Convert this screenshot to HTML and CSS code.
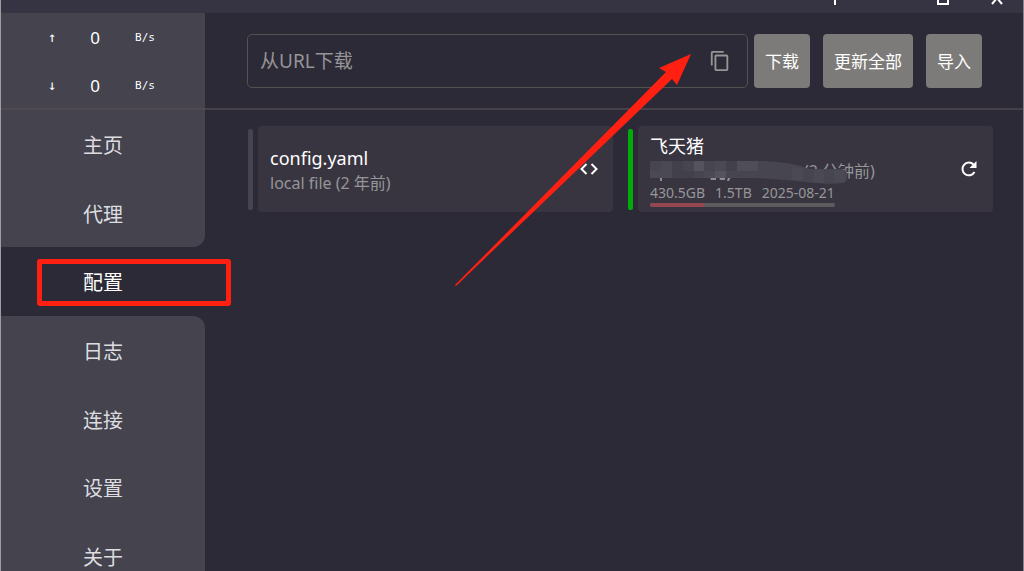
FILE: index.html
```html
<!DOCTYPE html>
<html lang="zh-CN">
<head>
    <meta charset="UTF-8">
    <meta name="viewport" content="width=device-width, initial-scale=1.0">
    <title>配置</title>
    <link rel="stylesheet" href="styles.css">
</head>
<body>
    <div class="app">
        <header class="titlebar">
            <button class="win" aria-label="置顶"><svg width="14" height="12"><path d="M7 0V5"/></svg></button>
            <button class="win" aria-label="最大化"><svg width="14" height="12"><path d="M2 0V4H12V0"/></svg></button>
            <button class="win" aria-label="关闭"><svg width="14" height="12"><path d="M2 4L7 -2L12 4"/></svg></button>
        </header>
        <div class="layout">
            <aside class="sidebar">
                <div class="traffic">
                    <div class="rate"><span class="dir">↑</span><span class="num">0</span><span class="unit">B/s</span></div>
                    <div class="rate"><span class="dir">↓</span><span class="num">0</span><span class="unit">B/s</span></div>
                </div>
                <nav class="menu">
                    <a href="#home">主页</a>
                    <a href="#proxies" class="before">代理</a>
                    <a href="#profiles" class="active">配置<span class="mark"></span></a>
                    <a href="#logs" class="after">日志</a>
                    <a href="#connections">连接</a>
                    <a href="#settings">设置</a>
                    <a href="#about">关于</a>
                </nav>
            </aside>
            <main class="main">
                <div class="toolbar">
                    <div class="url">
                        <input type="text" placeholder="从URL下载" aria-label="从URL下载">
                        <button class="copy" aria-label="粘贴">
                            <svg width="22" height="22" viewBox="0 0 24 24"><path d="M16 1H4c-1.100 0-2 .9-2 2v14h2V3h12V1zm3 4H8c-1.100 0-2 .9-2 2v14c0 1.100.9 2 2 2h11c1.100 0 2-.9 2-2V7c0-1.100-.9-2-2-2zm0 16H8V7h11v14z"/></svg>
                        </button>
                    </div>
                    <div class="btns">
                        <button>下载</button>
                        <button>更新全部</button>
                        <button>导入</button>
                    </div>
                </div>
                <div class="profiles">
                    <section class="profile">
                        <div class="bar"></div>
                        <div class="card">
                            <div class="info">
                                <h2>config.yaml</h2>
                                <p class="desc">local file (2 年前)</p>
                            </div>
                            <button class="icon" aria-label="编辑">
                                <svg width="20" height="20" viewBox="0 0 20 20"><path class="line" d="M7.500 5L2.500 10L7.500 15M12.500 5L17.500 10L12.500 15"/></svg>
                            </button>
                        </div>
                    </section>
                    <section class="profile selected">
                        <div class="bar"></div>
                        <div class="card">
                            <div class="info">
                                <h2>飞天猪</h2>
                                <p class="desc source">(2 分钟前)
                                    <svg class="mosaic" width="200" height="26" viewBox="0 0 200 26">
                                        <g fill="#8d8c90"><path d="M10 18h2v4h-2zM60 18h6v3h-5zM69 18h6v3h-5zM78 18h3l-2 4h-2z"/></g>
                                        <path fill="#464550" d="M0 3Q0 2 2 2H108Q138 2 160 10L192 10Q197 11 197 15V20Q197 23 192 24Q180 26 155 23Q135 21 108 19H2Q0 19 0 17Z"/>
                                        <g fill="#4b4a54"><path d="M0 12h22v7H0zM11 2h11v10H11zM65 2h11v10H65zM54 12h22v7H54zM142 9h11v12h-11zM164 11h10v13h-10zM184 11h11v12h-11z"/></g>
                                        <g fill="#55545e"><path d="M44 2h10v10H44zM65 12h11v7H65z"/></g>
                                        <g fill="#4f4e58"><path d="M87 2h21v10H87z"/></g>
                                        <g fill="#42414b"><path d="M22 2h11v17H22zM76 2h11v10H76zM33 12h11v7H33z"/></g>
                                    </svg>
                                </p>
                                <div class="usage">
                                    <p class="quota"><span>430.5GB</span><span>1.5TB</span><span>2025-08-21</span></p>
                                    <div class="progress"><div style="width:29%"></div></div>
                                </div>
                            </div>
                            <button class="icon" aria-label="更新">
                                <svg width="20" height="20" viewBox="0 0 20 20"><path class="line" d="M15.500 13A6.400 6.400 0 1 1 14.500 5.500"/><path d="M17.500 2V9H10.500Z"/></svg>
                            </button>
                        </div>
                    </section>
                </div>
            </main>
        </div>
        <svg class="arrow" width="236" height="232" viewBox="0 0 236 232"><path d="M236 0L204 14L211 18L0 231L1 232L217 25L222 31Z"/></svg>
    </div>
</body>
</html>
```
FILE: styles.css
```css
*{
    box-sizing: border-box;
}
body,h2,p{
    margin: 0;
}
body,button,input{
    font-family: "Noto Sans", "Noto Sans CJK SC", sans-serif;
}
button{
    padding: 0;
    border: 0;
    background: none;
    color: #fff;
}
svg{
    display: block;
}
.app{
    position: relative;
    display: flex;
    flex-direction: column;
    height: 100vh;
    overflow: hidden;
    border-left: 1px solid #9b9f9e;
    border-right: 1px solid #858588;
    background-color: #2d2a37;
}
.titlebar{
    display: flex;
    align-items: flex-start;
    justify-content: flex-end;
    gap: 40px;
    flex: none;
    height: 13px;
    padding-right: 19px;
    background-color: #363442;
}
.win{
    width: 14px;
}
.win:first-child{
    margin-right: 54px;
}
.win path{
    fill: none;
    stroke: #fff;
    stroke-width: 2;
}
.layout{
    display: flex;
    flex: 1;
    min-height: 0;
}
.sidebar{
    flex: none;
    width: 204px;
}
.traffic{
    height: 97px;
    border-bottom: 2px solid #514a50;
    background-color: #44434e;
}
.rate{
    display: grid;
    grid-template-columns: 18px 20px 32px;
    column-gap: 24px;
    align-items: center;
    height: 48px;
    padding-left: 42px;
    color: #fff;
    text-align: center;
}
.dir{
    font: 14px "DejaVu Sans Mono", monospace;
}
.num{
    font-size: 17px;
}
.unit{
    font: 11px "DejaVu Sans Mono", monospace;
}
.menu{
    display: grid;
    grid-template-rows: repeat(7, 1fr);
    height: 481px;
}
.menu a{
    display: flex;
    align-items: center;
    justify-content: center;
    background-color: #44434e;
    color: #dddde0;
    font-size: 20px;
    text-decoration: none;
}
.menu a.before{
    border-bottom-right-radius: 12px;
}
.menu a.after{
    border-top-right-radius: 12px;
}
.menu a.active{
    position: relative;
    background: none;
    color: #fff;
}
.mark{
    position: absolute;
    top: 12px;
    left: 36px;
    width: 194px;
    height: 47px;
    border: 5px solid #ff2012;
    border-radius: 3px;
}
.main{
    flex: 1;
    min-width: 0;
}
.toolbar{
    display: flex;
    align-items: center;
    gap: 6px;
    height: 97px;
    padding: 0 41px 0 42px;
    border-bottom: 2px solid #464148;
}
.url{
    display: flex;
    align-items: center;
    flex: 1;
    height: 54px;
    padding: 0 16px 0 12px;
    border: 1px solid #54514f;
    border-radius: 5px;
}
.url input{
    flex: 1;
    min-width: 0;
    padding: 0;
    border: 0;
    outline: 0;
    background: none;
    color: #fff;
    font-size: 19px;
}
.url input::placeholder{
    color: #969598;
}
.copy path{
    fill: #969598;
}
.btns{
    display: flex;
    gap: 13px;
}
.btns button{
    height: 54px;
    padding: 0 11px;
    border-radius: 4px;
    background-color: #7d7b79;
    font-size: 17px;
}
.profiles{
    display: grid;
    grid-template-columns: 1fr 1fr;
    gap: 15px;
    padding: 16px 30px 0 43px;
}
.profile{
    display: flex;
    gap: 5px;
}
.bar{
    width: 5px;
    margin: 3px 0 2px;
    border-radius: 2px;
    background-color: #464450;
}
.selected .bar{
    background-color: #00ab0a;
}
.card{
    display: flex;
    align-items: center;
    flex: 1;
    height: 86px;
    padding: 0 14px 0 12px;
    border-radius: 4px;
    background-color: #383541;
}
.info{
    flex: 1;
    padding-top: 2px;
}
.info h2{
    color: #fff;
    font-size: 18px;
    font-weight: 400;
    line-height: 26px;
}
.desc{
    color: #969598;
    font-size: 16px;
    line-height: 25px;
}
.source{
    position: relative;
    padding-left: 154px;
}
.mosaic{
    position: absolute;
    top: 0;
    left: 0;
}
.usage{
    width: fit-content;
}
.quota{
    display: flex;
    gap: 10px;
    color: #969598;
    font-size: 14px;
    line-height: 17px;
}
.progress{
    height: 4px;
    margin-top: 2px;
    border-radius: 2px;
    background-color: #5d5b5b;
    overflow: hidden;
}
.progress div{
    height: 100%;
    background-color: #954750;
}
.icon path{
    fill: #fff;
}
.icon .line{
    fill: none;
    stroke: #fff;
    stroke-width: 2;
}
.arrow{
    position: absolute;
    top: 54px;
    left: 454px;
    fill: #ff2012;
}
```
